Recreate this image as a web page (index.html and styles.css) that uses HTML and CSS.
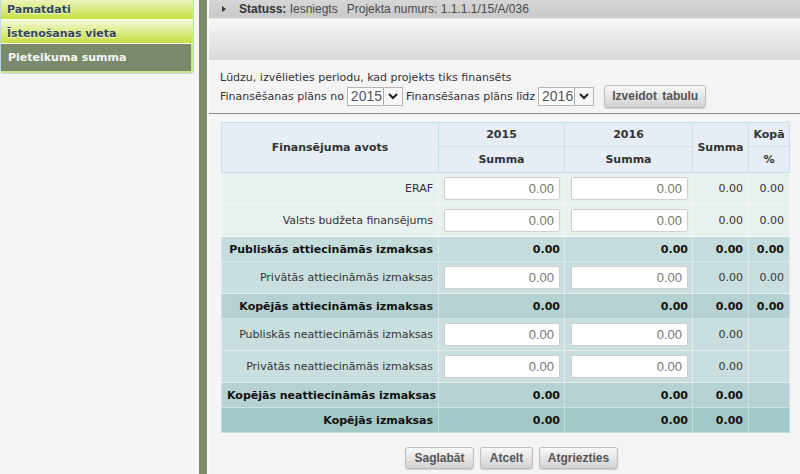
FILE: index.html
```html
<!DOCTYPE html>
<html lang="lv">
<head>
    <meta charset="UTF-8">
    <title>Pieteikuma summa</title>
    <link rel="stylesheet" href="styles.css">
</head>
<body>
<div class="page">
    <aside class="sidebar">
        <ul class="menu">
            <li class="menu-item">Pamatdati</li>
            <li class="menu-item">Īstenošanas vieta</li>
            <li class="menu-item active">Pieteikuma summa</li>
        </ul>
    </aside>
    <div class="rail"></div>
    <main class="main">
        <div class="status-bar">
            <span class="arrow"></span>
            <span><b>Statuss:</b> Iesniegts</span>
            <span class="project-no">Projekta numurs: 1.1.1.1/15/A/036</span>
        </div>
        <div class="toolbar"></div>
        <div class="period">
            <div class="period-text">Lūdzu, izvēlieties periodu, kad projekts tiks finansēts</div>
            <div class="period-row">
                <span>Finansēšanas plāns no</span>
                <span class="select"><span class="select-value">2015</span><span class="caret"><svg viewBox="0 0 12 12" width="12" height="12"><path d="M2 4 L6 8 L10 4" fill="none" stroke="#222" stroke-width="2"/></svg></span></span>
                <span>Finansēšanas plāns līdz</span>
                <span class="select"><span class="select-value">2016</span><span class="caret"><svg viewBox="0 0 12 12" width="12" height="12"><path d="M2 4 L6 8 L10 4" fill="none" stroke="#222" stroke-width="2"/></svg></span></span>
                <button class="btn btn-create">Izveidot tabulu</button>
            </div>
        </div>

        <table class="fin-table">
            <colgroup>
                <col class="c-name"><col class="c-year"><col class="c-year2"><col class="c-sum"><col class="c-pct">
            </colgroup>
            <thead>
                <tr class="h1">
                    <th rowspan="2">Finansējuma avots</th>
                    <th>2015</th>
                    <th>2016</th>
                    <th rowspan="2">Summa</th>
                    <th>Kopā</th>
                </tr>
                <tr class="h2">
                    <th>Summa</th>
                    <th>Summa</th>
                    <th>%</th>
                </tr>
            </thead>
            <tbody>
                <tr class="row-light">
                    <td class="name">ERAF</td>
                    <td><input type="text" value="0.00"></td>
                    <td><input type="text" value="0.00"></td>
                    <td class="num">0.00</td>
                    <td class="num">0.00</td>
                </tr>
                <tr class="row-light">
                    <td class="name">Valsts budžeta finansējums</td>
                    <td><input type="text" value="0.00"></td>
                    <td><input type="text" value="0.00"></td>
                    <td class="num">0.00</td>
                    <td class="num">0.00</td>
                </tr>
                <tr class="row-total">
                    <td class="name">Publiskās attiecināmās izmaksas</td>
                    <td class="num">0.00</td>
                    <td class="num">0.00</td>
                    <td class="num">0.00</td>
                    <td class="num">0.00</td>
                </tr>
                <tr class="row-mid">
                    <td class="name">Privātās attiecināmās izmaksas</td>
                    <td><input type="text" value="0.00"></td>
                    <td><input type="text" value="0.00"></td>
                    <td class="num">0.00</td>
                    <td class="num">0.00</td>
                </tr>
                <tr class="row-total dark">
                    <td class="name">Kopējās attiecināmās izmaksas</td>
                    <td class="num">0.00</td>
                    <td class="num">0.00</td>
                    <td class="num">0.00</td>
                    <td class="num">0.00</td>
                </tr>
                <tr class="row-mid">
                    <td class="name">Publiskās neattiecināmās izmaksas</td>
                    <td><input type="text" value="0.00"></td>
                    <td><input type="text" value="0.00"></td>
                    <td class="num">0.00</td>
                    <td></td>
                </tr>
                <tr class="row-mid">
                    <td class="name">Privātās neattiecināmās izmaksas</td>
                    <td><input type="text" value="0.00"></td>
                    <td><input type="text" value="0.00"></td>
                    <td class="num">0.00</td>
                    <td></td>
                </tr>
                <tr class="row-total dark">
                    <td class="name">Kopējās neattiecināmās izmaksas</td>
                    <td class="num">0.00</td>
                    <td class="num">0.00</td>
                    <td class="num">0.00</td>
                    <td></td>
                </tr>
                <tr class="row-total darker">
                    <td class="name">Kopējās izmaksas</td>
                    <td class="num">0.00</td>
                    <td class="num">0.00</td>
                    <td class="num">0.00</td>
                    <td></td>
                </tr>
            </tbody>
        </table>

        <div class="actions">
            <button class="btn btn-save">Saglabāt</button>
            <button class="btn btn-cancel">Atcelt</button>
            <button class="btn btn-back">Atgriezties</button>
        </div>
    </main>
</div>
</body>
</html>
```

FILE: styles.css
```css
html, body {
    margin: 0;
    height: 100%;
    overflow: hidden;
}
body {
    background: #f4f4f4;
    font-family: "DejaVu Sans", Verdana, sans-serif;
    font-size: 11px;
    color: #333;
}
.page {
    display: flex;
    height: 474px;
}
.sidebar {
    width: 199px;
    flex-shrink: 0;
    background: #f5f5f5;
}
.menu {
    list-style: none;
    margin: -4px 0 0 0;
    padding: 0;
    width: 192px;
    border: 1px solid #bcd6ea;
    border-top: none;
    border-radius: 0 0 4px 4px;
    background: #fff;
}
.menu-item {
    height: 23px;
    line-height: 28px;
    padding-left: 6px;
    font-weight: bold;
    font-size: 11px;
    color: #34445a;
    text-shadow: 0 1px 0 #f8fce8;
    background: linear-gradient(#f3f9d6, #c6e042);
    border-bottom: 1px solid #fafdf0;
}
.menu-item.active {
    height: 27px;
    line-height: 28px;
    padding-left: 7px;
    color: #f6f6f6;
    text-shadow: none;
    background: #7b8a6b;
    border: 1px solid #d0e48a;
    border-width: 0 2px 2px 0;
}
.rail {
    width: 8px;
    flex-shrink: 0;
    background: #7b8a6b;
}
.main {
    flex: 1;
    border-left: 2px solid #fbfbfb;
}
.status-bar {
    height: 18px;
    padding-left: 13px;
    display: flex;
    align-items: center;
    gap: 9px;
    font-family: "Liberation Sans", Arial, sans-serif;
    font-size: 12px;
    color: #4a4a4a;
    white-space: nowrap;
    background: linear-gradient(#d6d6d6, #c9c9c9);
    border-bottom: 1px solid #e9e9e9;
}
.status-bar b {
    color: #333;
}
.arrow {
    width: 0;
    height: 0;
    border-left: 4px solid #333;
    border-top: 3px solid transparent;
    border-bottom: 3px solid transparent;
    margin-right: 4px;
}
.toolbar {
    height: 41px;
    background: linear-gradient(#f7f7f7, #d8d8d8);
}
.period {
    height: 43px;
    padding: 10px 11px 0;
    border-bottom: 1px solid #8e8e8e;
}
.period-text {
    line-height: 16px;
}
.period-row {
    display: flex;
    align-items: center;
    height: 24px;
    margin-top: -2px;
    white-space: nowrap;
}
.select {
    display: inline-flex;
    height: 19px;
    margin: 0 3px 0 3px;
    border: 1px solid #b5b5b5;
    background: #fff;
    box-sizing: border-box;
}
.select-value {
    font-family: "Liberation Sans", Arial, sans-serif;
    font-size: 14px;
    color: #555;
    line-height: 17px;
    padding: 0 1px 0 3px;
}
.caret {
    width: 18px;
    border-left: 1px solid #aaa;
    display: flex;
    align-items: center;
    justify-content: center;
    background: #f7f7f7;
}
.btn {
    font-family: "Liberation Sans", Arial, sans-serif;
    font-size: 12px;
    font-weight: bold;
    color: #555;
    height: 22px;
    padding: 0;
    border: 1px solid #bdbdbd;
    border-radius: 3px;
    white-space: nowrap;
    background: linear-gradient(#f8f8f8, #d2d2d2);
    box-shadow: 0 1px 1px rgba(0, 0, 0, 0.15);
}
.btn-create {
    margin-left: 7px;
    width: 102px;
    height: 23px;
    word-spacing: 2px;
}
.btn-save { width: 69px; }
.btn-cancel { width: 53px; }
.btn-back { width: 79px; }
.fin-table {
    margin: 8px 0 0 12px;
    width: 568px;
    table-layout: fixed;
    border-collapse: collapse;
    border: 1px solid #cbe2e6;
}
.c-name { width: 217px; }
.c-year { width: 126px; }
.c-year2 { width: 128px; }
.c-sum { width: 56px; }
.c-pct { width: 41px; }
.fin-table th {
    background: #e6edf5;
    border: 1px solid #c8e2e6;
    font-weight: bold;
    color: #333;
    padding: 0;
    text-align: center;
}
.fin-table .h1 th { height: 23px; }
.fin-table .h2 th { height: 25px; }
.fin-table td {
    border: 1px solid #dcebeb;
    padding: 0 5px;
    white-space: nowrap;
}
.fin-table td.name,
.fin-table td.num {
    text-align: right;
}
.row-light td {
    height: 31px;
    background: #e9f0f0;
    border-color: #f3f7f7;
}
.row-mid td {
    height: 31px;
    background: #c9dfdf;
    border-color: #e2eeee;
}
.row-total td {
    height: 24px;
    background: #c5dcdc;
    font-weight: bold;
    color: #111;
    border-color: #d6e8e8;
}
.row-total.dark td {
    background: #b5d1d1;
    border-color: #cde2e2;
}
.row-total.darker td {
    background: #a3c8c8;
    border-color: #c4dddd;
}
.fin-table input {
    display: block;
    width: 100%;
    height: 23px;
    box-sizing: border-box;
    border: 1px solid #cfcfcf;
    border-radius: 2px;
    background: #fff;
    text-align: right;
    font-family: "Liberation Sans", Arial, sans-serif;
    font-size: 13px;
    color: #777;
    padding: 0 5px;
}
.fin-table td:nth-child(2) {
    padding: 0 4px 0 5px;
}
.fin-table td:nth-child(3) {
    padding: 0 4px 0 6px;
}
.actions {
    display: flex;
    gap: 6px;
    margin: 14px 0 0 196px;
}
```
